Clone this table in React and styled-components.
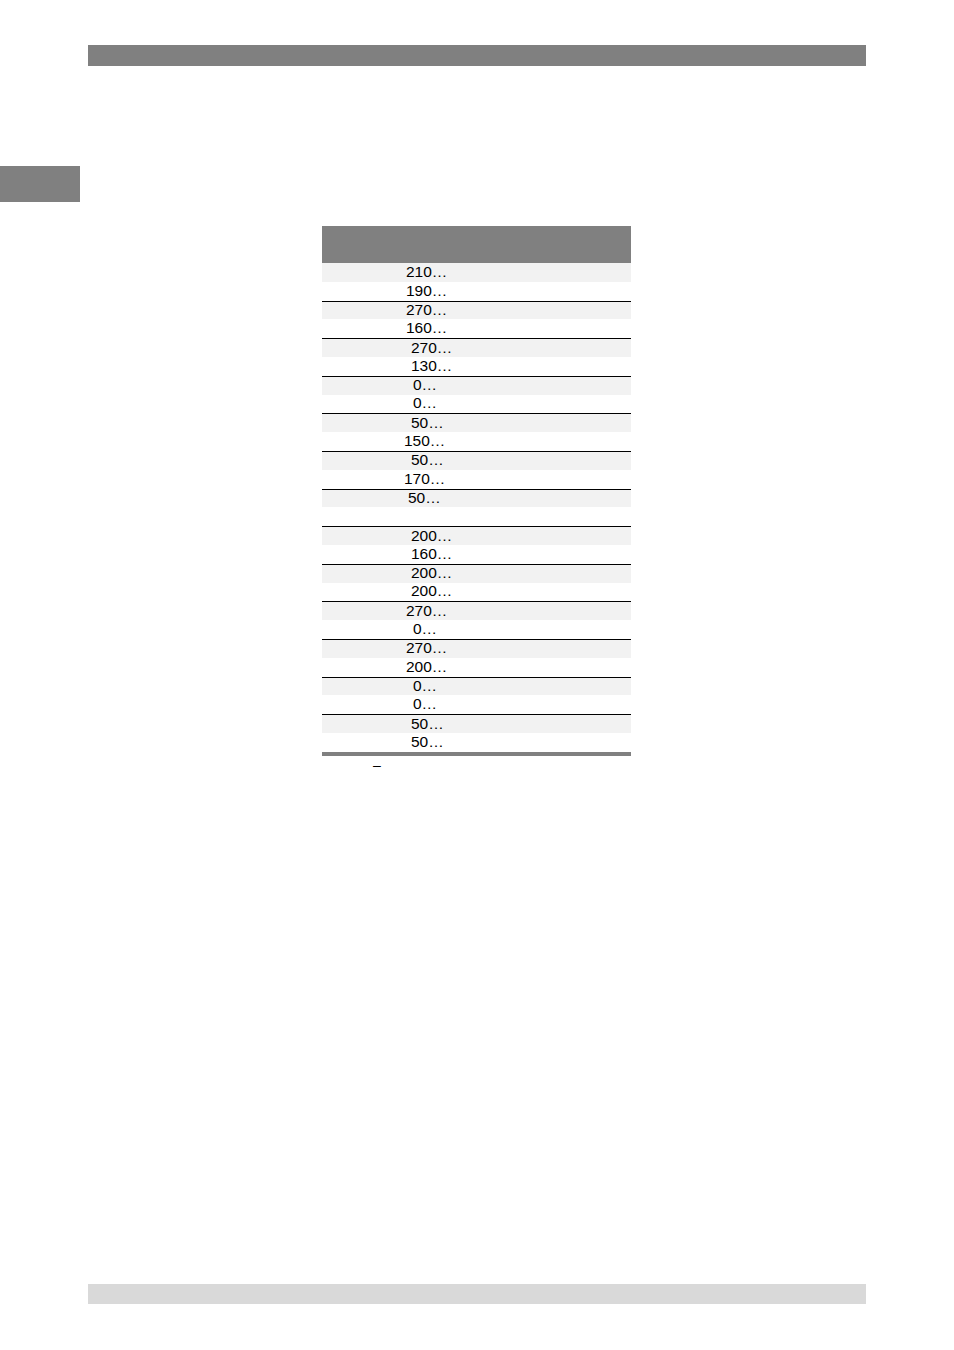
import styled, { createGlobalStyle } from "styled-components";

const rows = [
    {value: '210…', indent: 84},
    {value: '190…', indent: 84},
    {value: '270…', indent: 84},
    {value: '160…', indent: 84},
    {value: '270…', indent: 89},
    {value: '130…', indent: 89},
    {value: '0…', indent: 91},
    {value: '0…', indent: 91},
    {value: '50…', indent: 89},
    {value: '150…', indent: 82},
    {value: '50…', indent: 89},
    {value: '170…', indent: 82},
    {value: '50…', indent: 86},
    {value: '', indent: 0},
    {value: '200…', indent: 89},
    {value: '160…', indent: 89},
    {value: '200…', indent: 89},
    {value: '200…', indent: 89},
    {value: '270…', indent: 84},
    {value: '0…', indent: 91},
    {value: '270…', indent: 84},
    {value: '200…', indent: 84},
    {value: '0…', indent: 91},
    {value: '0…', indent: 91},
    {value: '50…', indent: 89},
    {value: '50…', indent: 89},
]

export default function App() {
    return (
        <>
            <GlobalStyle />
            <StyledPage>
                <StyledHeaderBar />
                <StyledSideTab />
                <StyledTableBlock>
                    <StyledTableHead />
                    {rows.map((row, index) => (
                        <StyledRow
                            key={index}
                            $shaded={index % 2 === 0}
                            $divider={index > 0 && index % 2 === 0}
                        >
                            <StyledCell $indent={row.indent}>{row.value}</StyledCell>
                        </StyledRow>
                    ))}
                    <StyledTableFoot />
                    <StyledNote>–</StyledNote>
                </StyledTableBlock>
                <StyledFooterBar />
            </StyledPage>
        </>
    )
}


const GlobalStyle = createGlobalStyle`
    html, body {
        margin: 0;
        padding: 0;
        background: #ffffff;
    }
    body {
        font-family: "Liberation Sans", Arial, sans-serif;
        color: #000000;
    }
`

const StyledPage = styled.div`
    display: flex;
    flex-direction: column;
    height: 1350px;
    padding: 45px 0 46px;
    box-sizing: border-box;
`

const StyledHeaderBar = styled.div`
    margin-left: 88px;
    width: 778px;
    height: 21px;
    background: #808080;
`

const StyledSideTab = styled.div`
    margin-top: 100px;
    width: 80px;
    height: 36px;
    background: #808080;
`

const StyledTableBlock = styled.div`
    margin: 24px 0 0 322px;
    width: 309px;
    display: flex;
    flex-direction: column;
`

const StyledTableHead = styled.div`
    height: 37px;
    background: #808080;
`

const StyledRow = styled.div`
    height: 18.8px;
    box-sizing: border-box;
    background: ${props => props.$shaded ? '#f2f2f2' : '#ffffff'};
    border-top: ${props => props.$divider ? '1px solid #000000' : 'none'};
    display: flex;
    align-items: center;
    padding-bottom: 2px;
`

const StyledCell = styled.span`
    padding-left: ${props => props.$indent}px;
    font-size: 15.5px;
    line-height: 17px;
    white-space: nowrap;
`

const StyledTableFoot = styled.div`
    height: 4px;
    background: #808080;
`

const StyledNote = styled.span`
    margin: 2px 0 0 51px;
    font-size: 14px;
    line-height: 14px;
`

const StyledFooterBar = styled.div`
    margin: auto 0 0 88px;
    width: 778px;
    height: 20px;
    background: #d9d9d9;
`
